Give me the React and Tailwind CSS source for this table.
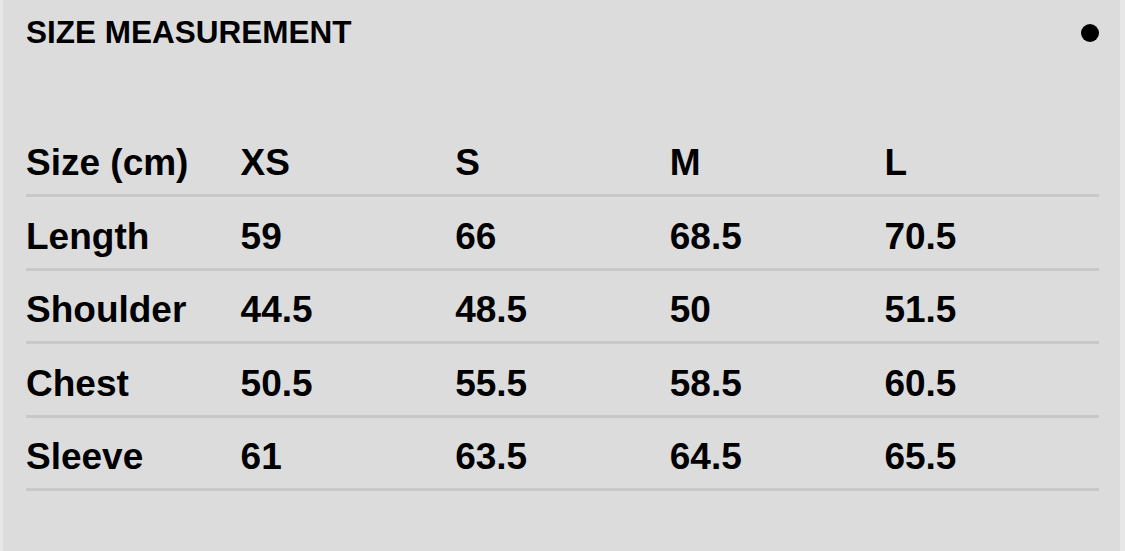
import React from "react";

const rows = [
  ["Size (cm)", "XS", "S", "M", "L"],
  ["Length", "59", "66", "68.5", "70.5"],
  ["Shoulder", "44.5", "48.5", "50", "51.5"],
  ["Chest", "50.5", "55.5", "58.5", "60.5"],
  ["Sleeve", "61", "63.5", "64.5", "65.5"],
];

export default function App() {
  return (
    <div
      className="flex w-[1125px] h-[551px] bg-[#e7e7e7] text-black"
      style={{ fontFamily: '"Liberation Sans", Arial, Helvetica, sans-serif' }}
    >
      <div className="ml-[3px] mr-[5px] flex-1 bg-[#dcdcdc] pl-[23px] pr-[21px] pt-[17px]">
        <div className="flex items-center justify-between">
          <h1 className="text-[31.5px] leading-[31px] font-bold">SIZE MEASUREMENT</h1>
          <span className="block w-[18px] h-[18px] rounded-full bg-black" />
        </div>
        <div className="mt-[96px]">
          {rows.map((r, i) => (
            <div
              key={i}
              className={`grid grid-cols-5 border-b-[3px] border-[#c8c8c8] pb-[13px] ${i === 0 ? "pt-0" : "pt-[20.5px]"}`}
            >
              {r.map((c, j) => (
                <div key={j} className="text-[37px] leading-[37px] font-bold">
                  {c}
                </div>
              ))}
            </div>
          ))}
        </div>
      </div>
    </div>
  );
}
